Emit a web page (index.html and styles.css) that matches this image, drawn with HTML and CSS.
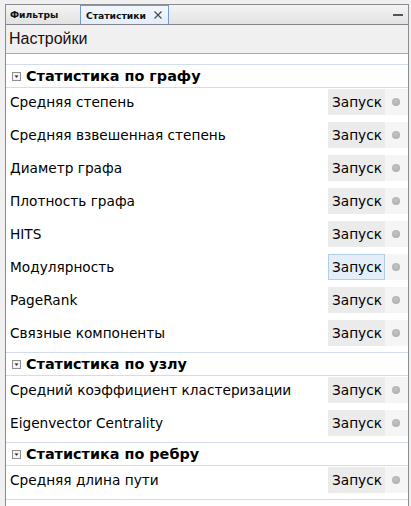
FILE: index.html
```html
<!DOCTYPE html>
<html lang="ru">
<head>
<meta charset="utf-8">
<title>Статистики</title>
<link rel="stylesheet" href="styles.css">
</head>
<body>
<div class="panel">
  <div class="tabbar">
    <div class="tab">Фильтры</div>
    <div class="tab active">Статистики
      <svg class="close" width="8" height="8" viewBox="0 0 8 8"><path d="M0.5 0.5L7.5 7.5M7.5 0.5L0.5 7.5" stroke="#4a4a4a" stroke-width="1.2"/></svg>
    </div>
    <div class="minimize"></div>
  </div>
  <div class="toolbar">Настройки</div>
  <div class="spacer"></div>

  <div class="section">
    <svg class="toggle" width="9" height="9" viewBox="0 0 9 9"><rect x="0.5" y="0.5" width="8" height="8" fill="#f4f4f4" stroke="#8e8e8e"/><path d="M2.5 3.5H6.5L4.5 5.8Z" fill="#222"/></svg>
    <span>Статистика по графу</span>
  </div>
  <div class="row"><span class="label">Средняя степень</span><span class="btn">Запуск</span><span class="dotcell"><i class="dot"></i></span></div>
  <div class="row"><span class="label">Средняя взвешенная степень</span><span class="btn">Запуск</span><span class="dotcell"><i class="dot"></i></span></div>
  <div class="row"><span class="label">Диаметр графа</span><span class="btn">Запуск</span><span class="dotcell"><i class="dot"></i></span></div>
  <div class="row"><span class="label">Плотность графа</span><span class="btn">Запуск</span><span class="dotcell"><i class="dot"></i></span></div>
  <div class="row"><span class="label">HITS</span><span class="btn">Запуск</span><span class="dotcell"><i class="dot"></i></span></div>
  <div class="row"><span class="label">Модулярность</span><span class="btn hover">Запуск</span><span class="dotcell"><i class="dot"></i></span></div>
  <div class="row"><span class="label">PageRank</span><span class="btn">Запуск</span><span class="dotcell"><i class="dot"></i></span></div>
  <div class="row"><span class="label">Связные компоненты</span><span class="btn">Запуск</span><span class="dotcell"><i class="dot"></i></span></div>

  <div class="section">
    <svg class="toggle" width="9" height="9" viewBox="0 0 9 9"><rect x="0.5" y="0.5" width="8" height="8" fill="#f4f4f4" stroke="#8e8e8e"/><path d="M2.5 3.5H6.5L4.5 5.8Z" fill="#222"/></svg>
    <span>Статистика по узлу</span>
  </div>
  <div class="row"><span class="label">Средний коэффициент кластеризации</span><span class="btn">Запуск</span><span class="dotcell"><i class="dot"></i></span></div>
  <div class="row"><span class="label">Eigenvector Centrality</span><span class="btn">Запуск</span><span class="dotcell"><i class="dot"></i></span></div>

  <div class="section">
    <svg class="toggle" width="9" height="9" viewBox="0 0 9 9"><rect x="0.5" y="0.5" width="8" height="8" fill="#f4f4f4" stroke="#8e8e8e"/><path d="M2.5 3.5H6.5L4.5 5.8Z" fill="#222"/></svg>
    <span>Статистика по ребру</span>
  </div>
  <div class="row"><span class="label">Средняя длина пути</span><span class="btn">Запуск</span><span class="dotcell"><i class="dot"></i></span></div>

  <div class="section">
    <svg class="toggle" width="9" height="9" viewBox="0 0 9 9"><rect x="0.5" y="0.5" width="8" height="8" fill="#f4f4f4" stroke="#8e8e8e"/><path d="M2.5 3.5H6.5L4.5 5.8Z" fill="#222"/></svg>
    <span>Динамика</span>
  </div>
</div>
</body>
</html>
```

FILE: styles.css
```css
html, body {
  margin: 0;
  padding: 0;
}
body {
  background: #f0f0f0;
  width: 411px;
  height: 506px;
  overflow: hidden;
  font-family: "DejaVu Sans", sans-serif;
  color: #000;
}
.panel {
  margin: 4px 0 0 5px;
  width: 404px;
  height: 520px;
  box-sizing: border-box;
  border: 1px solid #8a8a92;
  border-bottom: none;
  background: #fff;
}
.tabbar {
  height: 19px;
  display: flex;
  align-items: stretch;
  background: linear-gradient(#f4f4f4, #e2e2e2);
  border-bottom: 1px solid #85858d;
}
.tab {
  width: 74px;
  box-sizing: border-box;
  padding-left: 4px;
  display: flex;
  align-items: center;
  font-size: 9.2px;
  font-weight: bold;
  color: #111;
}
.tab.active {
  width: 89px;
  padding-left: 5px;
  background: linear-gradient(#f2f7fd, #e3edf9);
  border: 1px solid #6f9bd1;
  border-bottom: none;
}
.close {
  margin-left: 8px;
}
.minimize {
  margin: 9px 5px 0 auto;
  width: 10px;
  height: 2px;
  background: #555;
}
.toolbar {
  height: 29px;
  box-sizing: border-box;
  padding-left: 3px;
  display: flex;
  align-items: center;
  background: #f0f0f0;
  font-family: "Liberation Sans", sans-serif;
  font-size: 16px;
  color: #1a0f0f;
  border-bottom: 1px solid #8eaddb;
}
.spacer {
  height: 10px;
  background: #fff;
}
.section {
  height: 22px;
  border-top: 1px solid #d2dcf1;
  border-bottom: 1px solid #d2dcf1;
  display: flex;
  align-items: center;
  padding-left: 6px;
  font-size: 14.4px;
  font-weight: bold;
}
.toggle {
  margin-right: 5px;
  flex: none;
}
.row {
  height: 33px;
  display: flex;
  align-items: flex-start;
  padding-left: 4px;
  font-size: 13.7px;
}
.label {
  flex: 1;
  margin-top: 6px;
  line-height: 17px;
}
.btn {
  margin-top: 1px;
  width: 57px;
  height: 26px;
  box-sizing: border-box;
  padding-left: 3px;
  display: flex;
  align-items: center;
  background: #ebebeb;
  border: 1px solid #ebebeb;
}
.btn.hover {
  background: #e3eefa;
  border-color: #b3cde9;
}
.dotcell {
  margin-top: 1px;
  width: 23px;
  height: 26px;
  display: flex;
  align-items: center;
  justify-content: center;
  background: #f5f5f5;
}
.dot {
  width: 8px;
  height: 8px;
  border-radius: 50%;
  background: radial-gradient(circle at 45% 40%, #c4c4c4, #a9a9a9);
  margin-left: -2px;
}
```
